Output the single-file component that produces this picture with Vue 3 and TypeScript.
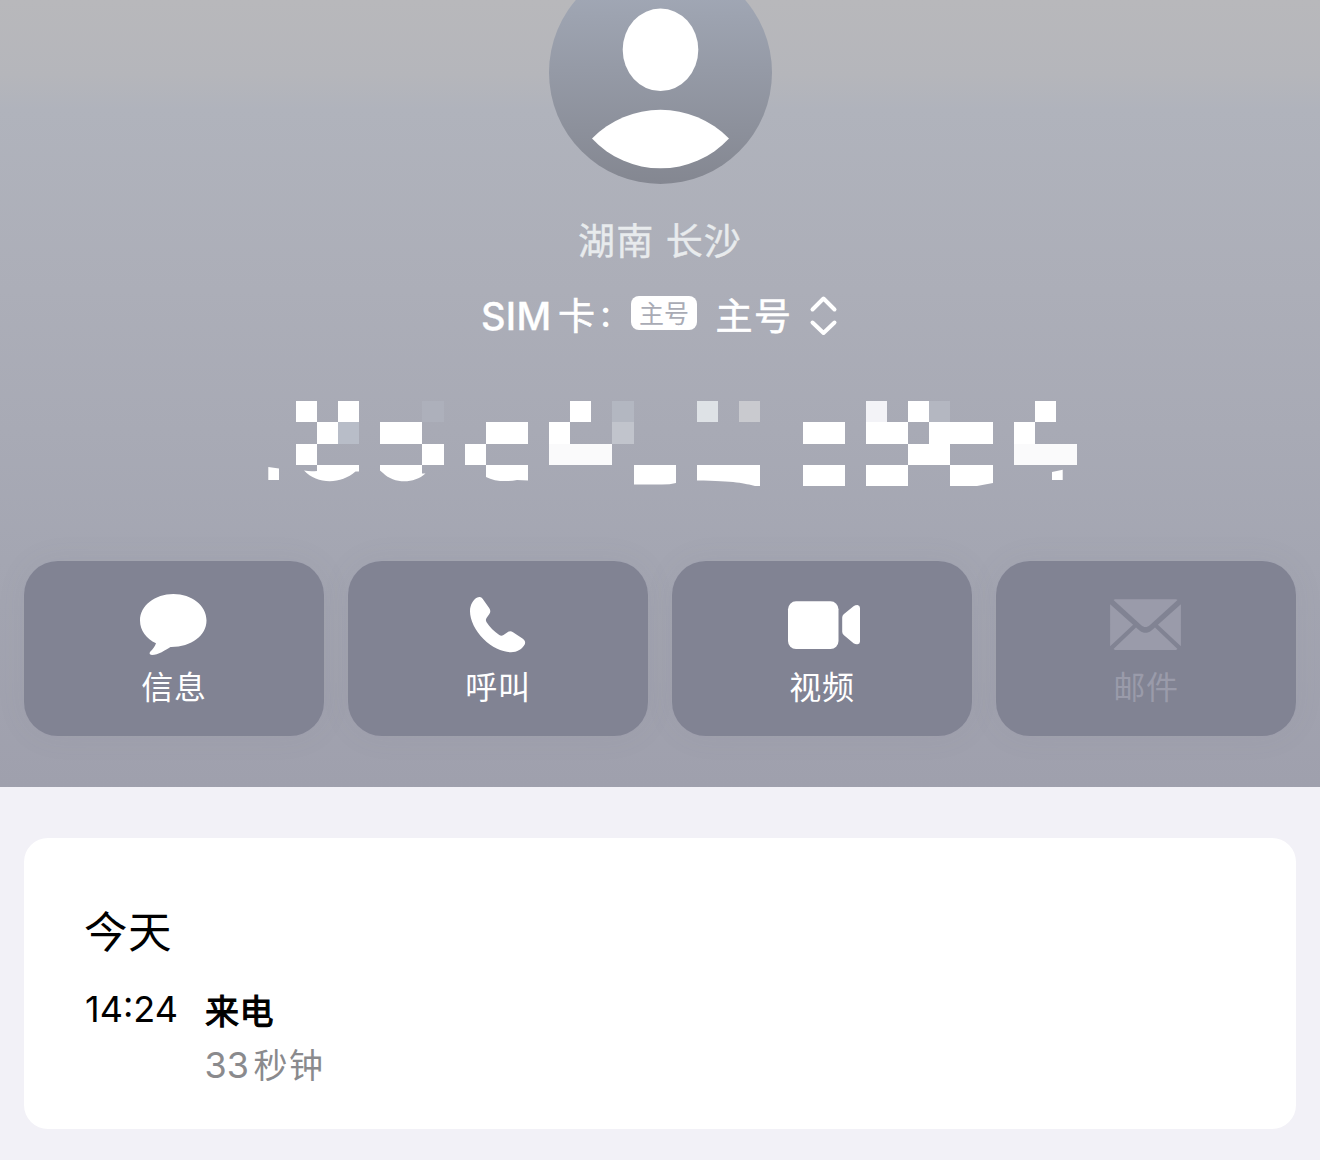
<script setup lang="ts">
interface Action {
  id: 'message' | 'call' | 'video' | 'mail'
  label: string
  disabled?: boolean
}

interface Cell {
  x: number
  w: number
  row: number
  fill?: string
}

const actions: Action[] = [
  { id: 'message', label: '信息' },
  { id: 'call', label: '呼叫' },
  { id: 'video', label: '视频' },
  { id: 'mail', label: '邮件', disabled: true },
]

// Top edges of the mosaic rows that hide the number
const rows = [401, 422, 444, 465, 486]

const cells: Cell[] = [
  { x: 296, w: 21, row: 0 },
  { x: 338, w: 21, row: 0 },
  { x: 422, w: 22, row: 0, fill: '#adb0bb' },
  { x: 570, w: 21, row: 0 },
  { x: 612, w: 22, row: 0, fill: '#b3b7c1' },
  { x: 697, w: 21, row: 0, fill: '#dee2e6' },
  { x: 739, w: 21, row: 0, fill: '#c9cacf' },
  { x: 866, w: 21, row: 0, fill: '#f3f3f7' },
  { x: 908, w: 21, row: 0 },
  { x: 929, w: 21, row: 0, fill: '#b4b7c1' },
  { x: 1035, w: 21, row: 0 },
  { x: 317, w: 21, row: 1 },
  { x: 338, w: 21, row: 1, fill: '#b8bdc8' },
  { x: 380, w: 42, row: 1 },
  { x: 486, w: 42, row: 1 },
  { x: 549, w: 21, row: 1 },
  { x: 612, w: 22, row: 1, fill: '#c1c4cc' },
  { x: 803, w: 42, row: 1 },
  { x: 866, w: 42, row: 1 },
  { x: 929, w: 64, row: 1 },
  { x: 1014, w: 21, row: 1 },
  { x: 296, w: 21, row: 2 },
  { x: 422, w: 22, row: 2 },
  { x: 465, w: 21, row: 2 },
  { x: 549, w: 63, row: 2, fill: '#fafafb' },
  { x: 908, w: 42, row: 2 },
  { x: 1014, w: 63, row: 2, fill: '#fafafb' },
  { x: 803, w: 42, row: 3 },
  { x: 866, w: 42, row: 3 },
]
</script>

<template>
  <main class="screen">
    <header class="hero">
      <svg class="avatar" viewBox="0 0 223 223" width="223" height="223">
        <defs>
          <linearGradient id="avatarFill" x1="0" y1="0" x2="0" y2="1">
            <stop offset="0" stop-color="#a6adbc" />
            <stop offset="0.25" stop-color="#9da3b0" />
            <stop offset="1" stop-color="#848791" />
          </linearGradient>
        </defs>
        <circle cx="111.5" cy="111.5" r="111.5" fill="url(#avatarFill)" />
        <ellipse cx="111.5" cy="88.8" rx="37.8" ry="41.3" fill="#fff" />
        <path d="M43 177.500A96 96 0 0 1 180 177.500A93.500 93.500 0 0 1 43 177.500Z" fill="#fff" />
      </svg>

      <p class="region">湖南 长沙</p>

      <div class="sim">
        <span class="sim-latin">SIM</span>
        <span class="sim-card">卡</span>
        <span class="sim-colon">:</span>
        <span class="badge">主号</span>
        <span class="sim-name">主号</span>
        <svg class="chevrons" width="30" height="42" viewBox="0 0 30 42" fill="none" stroke="#fff" stroke-width="4" stroke-linecap="round" stroke-linejoin="round">
          <path d="M3.500 14.500L14.500 3.500L25.500 14.500M3.500 27.500L14.500 38L25.500 27.500" />
        </svg>
      </div>

      <svg class="number" viewBox="0 380 1320 120" width="1320" height="120" fill="#fff">
        <rect
          v-for="(c, i) in cells"
          :key="i"
          :x="c.x"
          :y="rows[c.row]"
          :width="c.w"
          :height="rows[c.row + 1] - rows[c.row]"
          :fill="c.fill"
          shape-rendering="crispEdges"
        />
        <path d="M268.300 467L279 468.500V480H268.300Z" />
        <path d="M317 465H359V471.500H355.500C341 484.500 317 484.500 304 470.500C309 471.500 313 471.300 317 471Z" />
        <path d="M380 465H422V473.500H425.500C414 484 394 484 383 473L380 470.500Z" />
        <path d="M486 465H528V480.500L517 480C507 482 494 481.500 486 477Z" />
        <path d="M634 465H676V483Q670 484.600 662 484.600H634Z" />
        <path d="M697 465H760V486H755C745 483.500 735 480.800 697 480.500Z" />
        <path d="M950 465H993V483L977 486H950Z" />
        <path d="M1052 472L1062.700 469.800V480H1052Z" />
      </svg>

      <nav class="actions">
        <button v-for="a in actions" :key="a.id" type="button" class="action" :class="{ disabled: a.disabled }">
          <svg class="icon" width="80" height="70" viewBox="0 0 80 70" fill="currentColor">
            <path
              v-if="a.id === 'message'"
              d="M39.300 5C58 5 72.500 16.500 72.500 31.500S57 58.300 36.500 58C31.500 61 24 66 18 66C15.300 66 15 63.800 16.700 62.300C19 60 21 57.300 22 54.300C12.500 50 6 41.500 6 31.500C6 16.500 21 5 39.300 5Z"
            />
            <path
              v-else-if="a.id === 'call'"
              d="M21.300 8.100C23 7.900 24.200 9 25.500 10.900L31.300 19.300C32.700 21.400 32.600 23.300 31.200 25.300L28.700 28.700C27.600 30.300 27.600 31.700 28.600 33.300C31.500 38 36.500 43 41.300 46C42.800 46.900 44 46.900 45.500 45.900L49.500 43.200C51.300 42 53.200 42.100 55 43.200L64.500 49.600C67 51.400 67.700 53.200 66.700 55.500C64.500 60 59 63.200 53 63.200C44.500 63.200 34 58.500 25.500 50C17 41.500 12 31 12 22.300C12 16 15.300 10.300 19.300 8.600C20 8.300 20.600 8.100 21.300 8.100Z"
            />
            <g v-else-if="a.id === 'video'">
              <rect x="6" y="12.300" width="50.500" height="47.700" rx="8" />
              <path d="M60.200 28.500Q60.200 26.600 61.700 25.200L71.500 17.200Q73.300 16 75.500 16Q78 16.300 78 19V52.500Q78 55.100 75.500 55.300Q73.300 55.500 71.500 54.300L61.700 46Q60.200 44.700 60.200 42.800Z" />
            </g>
            <g v-else transform="translate(-0.500 0)">
              <path d="M8 11C9 10.300 10.500 10.300 12 10.300H68C69.600 10.300 71 10.300 72 11L44.500 36C41.300 38.700 38.700 38.700 35.500 36Z" />
              <path d="M4.600 15.200L27.600 35.700L4.600 57.200Z" />
              <path d="M75.400 15.200L52.400 35.700L75.400 57.200Z" />
              <path d="M8 60L30.500 38.500L34.300 41.700C38 44.500 42 44.500 45.700 41.700L49.500 38.500L72 60C71 61 70 61 68.500 61H11.500C10 61 9 61 8 60Z" />
            </g>
          </svg>
          <span class="label">{{ a.label }}</span>
        </button>
      </nav>
    </header>

    <section class="card">
      <h2 class="day">今天</h2>
      <div class="entry">
        <time class="time">14<span class="time-colon">:</span>24</time>
        <div class="details">
          <p class="kind">来电</p>
          <p class="duration"><span class="count">33</span>秒钟</p>
        </div>
      </div>
    </section>
  </main>
</template>

<style>
body {
  margin: 0;
  background: #f2f1f7;
}
</style>

<style scoped>
.screen {
  width: 1320px;
  height: 1160px;
  overflow: hidden;
  background: #f2f1f7;
  font-family: Inter, 'Noto Sans CJK SC', sans-serif;
}

p,
h2 {
  margin: 0;
  font-weight: 400;
}

.hero {
  display: flex;
  flex-direction: column;
  align-items: center;
  height: 787px;
  overflow: hidden;
  background: linear-gradient(#b8b8bb 0, #b5b6bb 75px, #b0b3bc 110px, #acaeb8 290px, #a8aab5 430px, #a4a6b2 560px, #9fa0ad 787px);
}

.avatar {
  flex: none;
  margin-top: -39px;
  margin-left: 1px;
}

.region {
  margin-top: 30px;
  height: 56px;
  line-height: 56px;
  font-size: 37px;
  letter-spacing: 1.1px;
  color: #e8ebed;
  -webkit-text-stroke: 0.4px #e8ebed;
}

.sim {
  display: flex;
  align-items: center;
  width: 358px;
  height: 50px;
  margin-top: 21px;
  color: #fff;
  font-size: 37px;
  line-height: 50px;
  -webkit-text-stroke: 0.6px currentColor;
}

.sim-latin {
  width: 77px;
  margin-top: -1px;
  font-size: 38px;
  font-weight: 500;
  letter-spacing: 0.3px;
  -webkit-text-stroke: 0.3px currentColor;
}

.sim-card {
  width: 42px;
  margin-top: 1px;
}

.sim-colon {
  width: 31px;
  margin-top: -4px;
  font-weight: 500;
  -webkit-text-stroke: 0;
}

.badge {
  width: 66px;
  height: 34px;
  margin-top: -7px;
  border-radius: 8px;
  background: #fff;
  color: #a9abb5;
  font-size: 25px;
  line-height: 37px;
  text-align: center;
  -webkit-text-stroke: 0;
}

.sim-name {
  margin-top: 1px;
  margin-left: 18.5px;
  letter-spacing: 1.5px;
}

.chevrons {
  flex: none;
  margin-left: auto;
}

.number {
  flex: none;
  margin-top: 39px;
}

.actions {
  display: flex;
  gap: 24px;
  margin-top: 61px;
}

.action {
  display: flex;
  flex-direction: column;
  align-items: center;
  width: 300px;
  height: 175px;
  padding: 28px 0 0;
  border: 0;
  border-radius: 34px;
  background: #818393;
  box-shadow: 0 0 30px rgba(110, 112, 130, 0.08);
  color: #fff;
  font-family: inherit;
}

.action.disabled {
  color: #9a9baa;
}

.icon {
  flex: none;
}

.label {
  height: 48px;
  margin-top: 5px;
  font-size: 32px;
  line-height: 48px;
  letter-spacing: 0.8px;
}

.card {
  box-sizing: border-box;
  width: 1272px;
  height: 291px;
  margin: 51px 24px 0;
  padding: 62px 61px 0 60px;
  border-radius: 24px;
  background: #fff;
  color: #000;
}

.day {
  height: 64px;
  font-size: 43.5px;
  line-height: 64px;
  letter-spacing: 0.6px;
}

.entry {
  display: flex;
  margin-top: 19px;
}

.time {
  width: 121px;
  padding-left: 1px;
  box-sizing: border-box;
  font-size: 36px;
  line-height: 52px;
}

.time-colon {
  position: relative;
  top: -2px;
}

.kind {
  height: 54px;
  margin-top: 2px;
  font-size: 34px;
  line-height: 54px;
  letter-spacing: 0.4px;
  -webkit-text-stroke: 1.1px currentColor;
}

.duration {
  height: 56px;
  margin-top: -2px;
  margin-left: -0.5px;
  font-size: 34px;
  line-height: 56px;
  letter-spacing: 1.5px;
  color: #8a8a8d;
}

.count {
  margin-right: 4.5px;
  font-size: 36px;
  letter-spacing: 0;
}
</style>
